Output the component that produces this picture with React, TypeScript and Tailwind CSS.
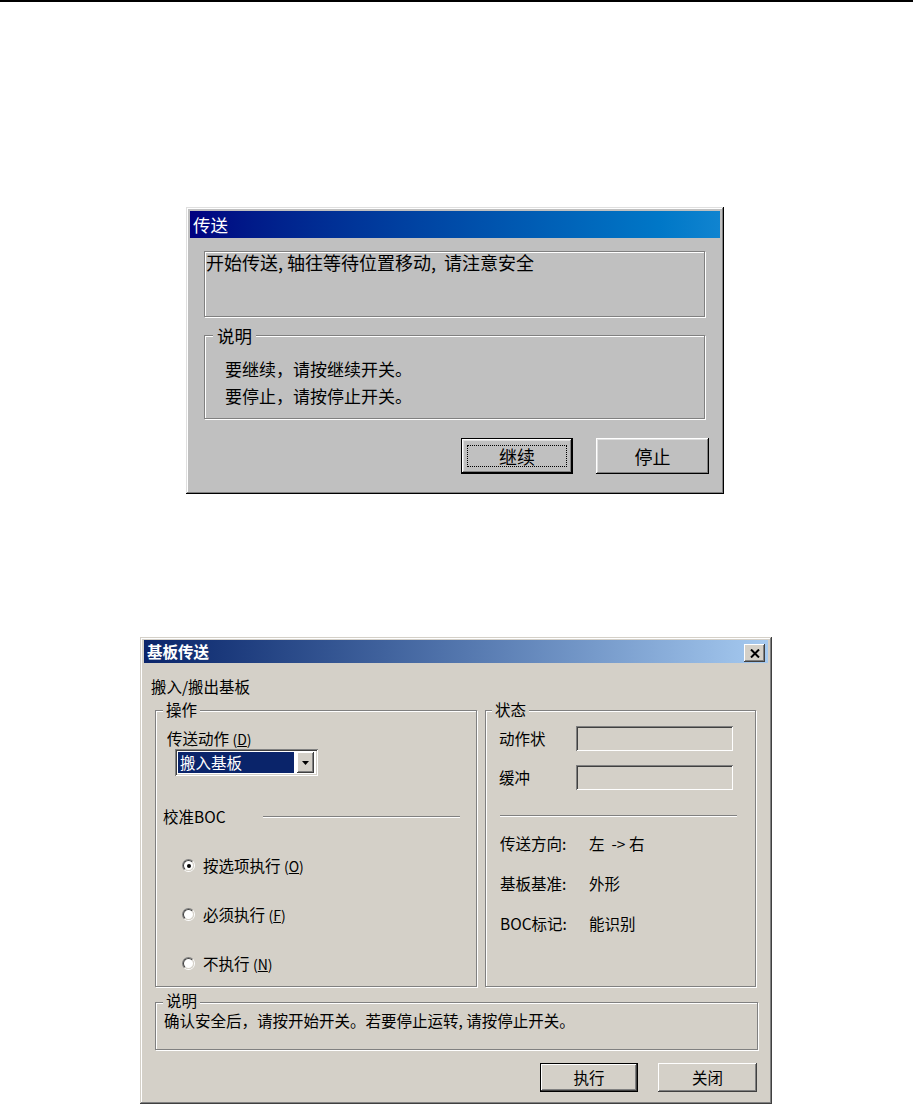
import React from "react";

const etched = "border border-[#808080] shadow-[inset_1px_1px_0_#fff,1px_1px_0_#fff]";

function Btn98({ children, def = false, focus = false, className = "" }: { children: React.ReactNode; def?: boolean; focus?: boolean; className?: string }) {
  return (
    <button
      className={
        "relative flex items-center justify-center bg-[#c0c0c0] text-[18px] leading-none text-black " +
        (def
          ? "border border-black shadow-[inset_-1px_-1px_0_#000,inset_1px_1px_0_#fff,inset_-2px_-2px_0_#808080,inset_2px_2px_0_#dfdfdf] "
          : "shadow-[inset_-1px_-1px_0_#000,inset_1px_1px_0_#fff,inset_-2px_-2px_0_#808080,inset_2px_2px_0_#dfdfdf] ") +
        className
      }
    >
      {focus && <span className="absolute inset-x-[5px] inset-y-[6px] border border-dotted border-black" />}
      <span className="relative">{children}</span>
    </button>
  );
}

function Btn2k({ children, def = false, className = "" }: { children: React.ReactNode; def?: boolean; className?: string }) {
  return (
    <button
      className={
        "flex items-center justify-center bg-[#d4d0c8] text-[15.5px] leading-none text-black " +
        (def
          ? "border border-black shadow-[inset_-1px_-1px_0_#404040,inset_1px_1px_0_#fff,inset_-2px_-2px_0_#808080] "
          : "shadow-[inset_-1px_-1px_0_#404040,inset_1px_1px_0_#fff,inset_-2px_-2px_0_#808080,inset_2px_2px_0_#d4d0c8] ") +
        className
      }
    >
      {children}
    </button>
  );
}

function Radio({ checked = false }: { checked?: boolean }) {
  return (
    <span className="relative block w-[13px] h-[13px] shrink-0 rounded-full border border-t-[#808080] border-l-[#808080] border-b-white border-r-white">
      <span className="absolute inset-0 flex items-center justify-center rounded-full border border-t-[#404040] border-l-[#404040] border-b-[#d4d0c8] border-r-[#d4d0c8] bg-white">
        {checked && <span className="block w-[4px] h-[4px] rounded-full bg-black" />}
      </span>
    </span>
  );
}

function Key({ k }: { k: string }) {
  return (
    <span className="text-[14px]">
      (<span className="underline">{k}</span>)
    </span>
  );
}

function TransferPrompt() {
  return (
    <div className="ml-[186px] mt-[205px] flex h-[287px] w-[538px] flex-col bg-[#c0c0c0] p-[4px] shadow-[inset_-1px_-1px_0_#000,inset_1px_1px_0_#dfdfdf,inset_-2px_-2px_0_#808080,inset_2px_2px_0_#fff]">
      <div className="flex h-[27px] items-center bg-linear-to-r from-[#000080] to-[#1084d0] pl-[3px] text-[17.5px] leading-none text-white">
        传送
      </div>

      <div className={"ml-[14px] mt-[13px] h-[66px] w-[501px] whitespace-pre px-[1px] text-[18px] leading-[20px] " + etched}>
        开始传送, 轴往等待位置移动,  请注意安全
      </div>

      <div className={"relative ml-[14px] mt-[18px] h-[84px] w-[501px] pl-[20px] pt-[19px] text-[17px] leading-[27px] " + etched}>
        <span className="absolute -top-[9px] left-[8px] bg-[#c0c0c0] px-[4px] text-[17.5px] leading-[17px]">说明</span>
        <p>要继续，请按继续开关。</p>
        <p>要停止，请按停止开关。</p>
      </div>

      <div className="mt-[19px] flex justify-end gap-[23px] pr-[11px]">
        <Btn98 def focus className="h-[36px] w-[112px]">
          继续
        </Btn98>
        <Btn98 className="h-[36px] w-[113px]">停止</Btn98>
      </div>
    </div>
  );
}

function BoardTransfer() {
  return (
    <div className="ml-[140px] mt-[143px] flex h-[467px] w-[632px] flex-col bg-[#d4d0c8] px-[4px] pt-[3px] text-[15.5px] leading-[15px] text-black shadow-[inset_-1px_-1px_0_#404040,inset_1px_1px_0_#d4d0c8,inset_-2px_-2px_0_#808080,inset_2px_2px_0_#fff]">
      {/* title bar */}
      <div className="flex h-[23px] items-center justify-between bg-linear-to-r from-[#0a246a] to-[#a6caf0] pl-[3px] pr-[3px]">
        <span className="text-[15.5px] font-bold leading-none text-white">基板传送</span>
        <span className="mt-[3px] flex h-[18px] w-[21px] items-center justify-center bg-[#d4d0c8] shadow-[inset_-1px_-1px_0_#404040,inset_1px_1px_0_#fff,inset_-2px_-2px_0_#808080]">
          <svg width="10" height="9" viewBox="0 0 10 9">
            <path d="M1 0.5 L9 8.5 M9 0.5 L1 8.5" stroke="#000" strokeWidth="2" />
          </svg>
        </span>
      </div>

      <div className="mt-[16px] pl-[7px]">搬入/搬出基板</div>

      <div className="mt-[16px] flex gap-[8px] pl-[11px]">
        {/* 操作 */}
        <div className={"relative flex h-[277px] w-[322px] flex-col " + etched}>
          <span className="absolute -top-[9px] left-[7px] bg-[#d4d0c8] px-[3px]">操作</span>
          <div className="pl-[11px] pt-[20px]">
            传送动作 <Key k="D" />
          </div>
          <div className="ml-[19px] mt-[2px] flex h-[27px] w-[143px] items-center gap-[3px] bg-white p-[3px] pr-[4px] shadow-[inset_1px_1px_0_#808080,inset_-1px_-1px_0_#fff,inset_2px_2px_0_#404040,inset_-2px_-2px_0_#d4d0c8]">
            <div className="flex h-full w-[116px] items-center bg-[#0a246a] pl-[2px] text-white">搬入基板</div>
            <div className="flex h-full w-[17px] items-center justify-center bg-[#d4d0c8] shadow-[inset_-1px_-1px_0_#404040,inset_1px_1px_0_#fff,inset_-2px_-2px_0_#808080]">
              <svg width="7" height="4" viewBox="0 0 7 4">
                <polygon points="0,0 7,0 3.5,4" fill="#000" />
              </svg>
            </div>
          </div>

          <div className="mt-[33px] flex items-center">
            <span className="pl-[7px]">校准BOC</span>
            <span className="ml-auto mr-[16px] h-[2px] w-[197px] border-t border-b border-t-[#808080] border-b-white" />
          </div>

          <div className="mt-[34px] flex flex-col gap-[34px] pl-[26px]">
            <label className="flex h-[15px] items-center gap-[8px]">
              <Radio checked />
              <span>
                按选项执行 <Key k="O" />
              </span>
            </label>
            <label className="flex h-[15px] items-center gap-[8px]">
              <Radio />
              <span>
                必须执行 <Key k="F" />
              </span>
            </label>
            <label className="flex h-[15px] items-center gap-[8px]">
              <Radio />
              <span>
                不执行 <Key k="N" />
              </span>
            </label>
          </div>
        </div>

        {/* 状态 */}
        <div className={"relative flex h-[277px] w-[271px] flex-col " + etched}>
          <span className="absolute -top-[9px] left-[6px] bg-[#d4d0c8] px-[3px]">状态</span>
          <div className="mt-[15px] flex h-[25px] items-center">
            <span className="w-[90px] pl-[13px]">动作状</span>
            <span className="h-[25px] w-[157px] bg-[#d4d0c8] shadow-[inset_1px_1px_0_#808080,inset_-1px_-1px_0_#fff,inset_2px_2px_0_#404040,inset_-2px_-2px_0_#d4d0c8]" />
          </div>
          <div className="mt-[14px] flex h-[25px] items-center">
            <span className="w-[90px] pl-[13px]">缓冲</span>
            <span className="h-[25px] w-[157px] bg-[#d4d0c8] shadow-[inset_1px_1px_0_#808080,inset_-1px_-1px_0_#fff,inset_2px_2px_0_#404040,inset_-2px_-2px_0_#d4d0c8]" />
          </div>
          <span className="ml-[14px] mt-[25px] h-[2px] w-[237px] border-t border-b border-t-[#808080] border-b-white" />
          <div className="mt-[19px] flex flex-col gap-[25px] pl-[14px]">
            <div className="flex">
              <span className="w-[89px]">传送方向:</span>
              <span className="whitespace-pre">左  -&gt; 右</span>
            </div>
            <div className="flex">
              <span className="w-[89px]">基板基准:</span>
              <span>外形</span>
            </div>
            <div className="flex">
              <span className="w-[89px]">BOC标记:</span>
              <span>能识别</span>
            </div>
          </div>
        </div>
      </div>

      <div className={"relative ml-[11px] mt-[15px] h-[48px] w-[603px] pl-[8px] pt-[10px] " + etched}>
        <span className="absolute -top-[10px] left-[7px] bg-[#d4d0c8] px-[3px]">说明</span>
        确认安全后，请按开始开关。若要停止运转, 请按停止开关。
      </div>

      <div className="mt-[13px] flex justify-end gap-[20px] pr-[11px]">
        <Btn2k def className="h-[29px] w-[98px]">
          执行
        </Btn2k>
        <Btn2k className="h-[29px] w-[99px]">关闭</Btn2k>
      </div>
    </div>
  );
}

export default function App() {
  return (
    <div className="flex min-h-[1106px] w-full flex-col items-start bg-white font-['Noto_Sans_CJK_SC','Noto_Sans',sans-serif]">
      <div className="h-[2px] w-full bg-black" />
      <TransferPrompt />
      <BoardTransfer />
    </div>
  );
}
